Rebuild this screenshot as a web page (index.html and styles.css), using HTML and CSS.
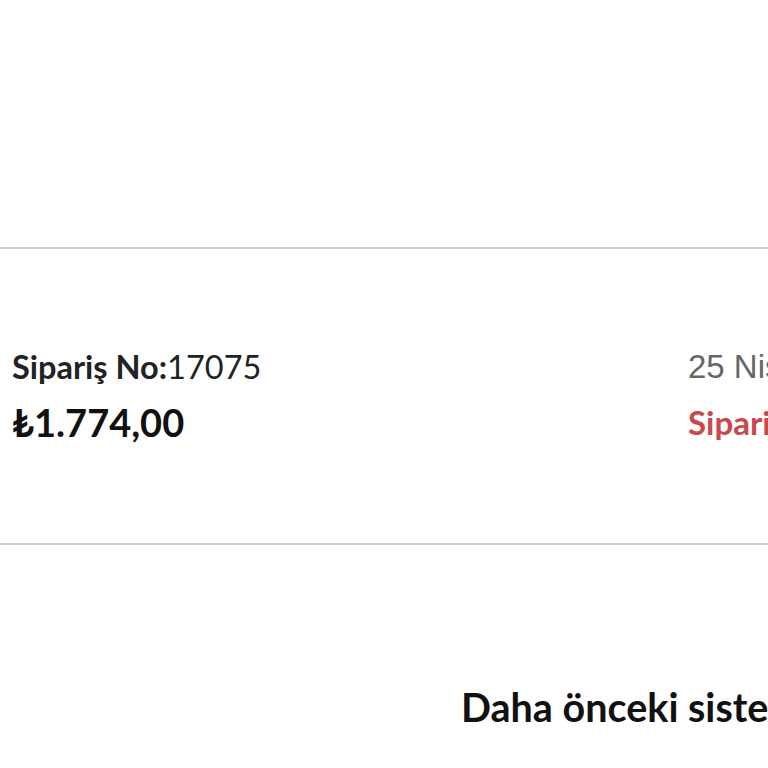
FILE: index.html
```html
<!DOCTYPE html>
<html lang="tr">
<head>
    <meta charset="UTF-8">
    <meta name="viewport" content="width=device-width, initial-scale=1.0">
    <title>Siparişlerim</title>
    <link rel="stylesheet" href="styles.css">
</head>
<body>
    <div class="page">
        <div class="order">
            <div class="order-left">
                <p class="order-no"><strong>Sipariş No:</strong>17075</p>
                <p class="order-price">₺1.774,00</p>
            </div>
            <div class="order-right">
                <p class="order-date">25 Nisan 2024</p>
                <p class="order-status">Sipariş Alındı</p>
            </div>
        </div>
        <h2 class="old-orders">Daha önceki sistemden verilen siparişler</h2>
    </div>
</body>
</html>
```

FILE: styles.css
```css
html, body {
    margin: 0;
    padding: 0;
    background-color: #fff;
    overflow: hidden;
}

body {
    font-family: Lato, "Open Sans", sans-serif;
    color: #111;
}

.page {
    width: 1100px;
    padding-top: 247px;
}

.order {
    display: grid;
    grid-template-columns: 676px auto;
    align-items: center;
    height: 294px;
    padding: 0 12px;
    border-top: 2px solid #cfcfcf;
    border-bottom: 2px solid #cfcfcf;
}

.order p {
    margin: 0;
    white-space: nowrap;
}

.order-no {
    font-size: 32.5px;
    line-height: 40px;
    color: #222;
}

.order-no strong {
    font-weight: 700;
}

.order-price {
    font-size: 38px;
    font-weight: 700;
    line-height: 46px;
    margin-top: 12px !important;
}

.order-date {
    font-family: "Liberation Sans", Arial, sans-serif;
    font-size: 33px;
    line-height: 40px;
    color: #666;
}

.order-status {
    font-size: 33px;
    font-weight: 700;
    line-height: 46px;
    margin-top: 12px !important;
    color: #c9474f;
}

.old-orders {
    margin: 138px 0 0 461px;
    font-size: 39.5px;
    font-weight: 700;
    white-space: nowrap;
}
```
